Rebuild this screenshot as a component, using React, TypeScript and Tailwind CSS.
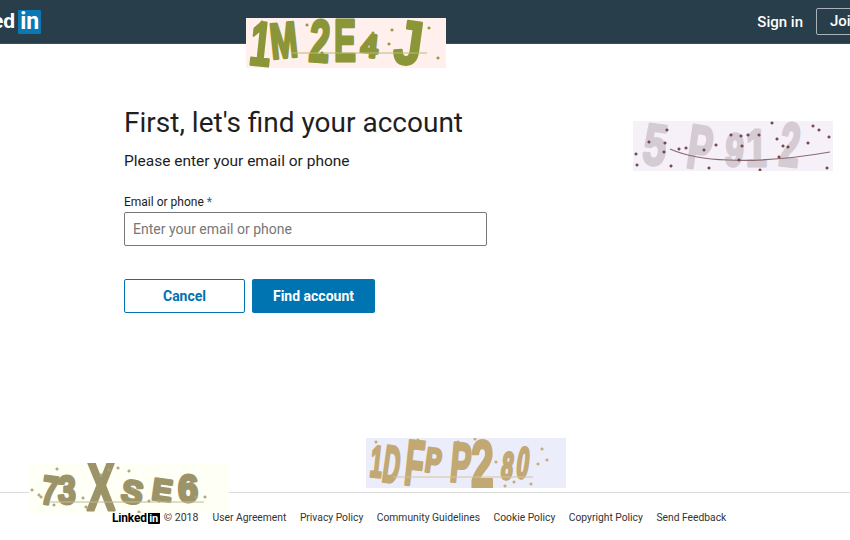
type Glyph = { c: string; x: number; y: number; size: number; sx?: number; rot?: number };

type CaptchaProps = {
  className: string;
  bg: string;
  ink: string;
  dotInk: string;
  lineInk: string;
  line: string;
  glyphs: Glyph[];
  dots: [number, number][];
};

function Captcha({ className, bg, ink, dotInk, lineInk, line, glyphs, dots }: CaptchaProps) {
  return (
    <svg className={`absolute ${className}`} width="200" height="50" viewBox="0 0 200 50">
      <rect width="200" height="50" fill={bg} />
      {glyphs.map((g, i) => (
        <text
          key={i}
          transform={`translate(${g.x} ${g.y}) rotate(${g.rot ?? 0}) scale(${g.sx ?? 1} 1)`}
          fontFamily="'Liberation Sans', sans-serif"
          fontWeight={700}
          fontSize={g.size}
          fill={ink}
          stroke={ink}
          strokeWidth="3"
          strokeLinejoin="round"
        >
          {g.c}
        </text>
      ))}
      <path d={line} fill="none" stroke={lineInk} strokeWidth="1.2" />
      {dots.map(([x, y], i) => (
        <path key={i} d={`M${x - 1.5} ${y}H${x + 1.5}M${x} ${y - 1.5}V${y + 1.5}`} stroke={dotInk} strokeWidth="1.4" />
      ))}
    </svg>
  );
}

function InLogo({ className }: { className: string }) {
  return (
    <span className={`inline-flex items-center justify-center rounded-[1px] font-bold ${className}`}>in</span>
  );
}

const footerLinks = [
  "User Agreement",
  "Privacy Policy",
  "Community Guidelines",
  "Cookie Policy",
  "Copyright Policy",
  "Send Feedback",
];

export default function App() {
  return (
    <div className="relative h-[540px] w-[850px] overflow-hidden bg-white font-['Roboto',sans-serif] text-[#1d1d1d]">
      <header className="flex h-[44px] items-center justify-between border-b border-[#3a4f5b] bg-[#283e4a]">
        <div className="flex items-center">
          <span className="ml-[-8px] text-[21px] font-bold leading-none text-white">ed</span>
          <InLogo className="ml-[3px] h-[24px] w-[23px] bg-[#0a78b5] pb-[1px] text-[23px] leading-none text-white" />
        </div>
        <div className="flex items-center">
          <span className="whitespace-nowrap pt-[1px] text-[15px] font-medium text-white">Sign in</span>
          <span className="ml-[13px] mr-[-36px] flex h-[27px] w-[70px] items-center whitespace-nowrap rounded-[2px] border border-[#a8b2b8] pl-[13px] text-[15px] font-medium text-white">
            Join now
          </span>
        </div>
      </header>

      <main className="pl-[124px] pt-[61px]">
        <h1 className="text-[28px] leading-[36px] text-[#1f1f1f]">First, let's find your account</h1>
        <p className="mt-[9px] text-[15.5px] leading-[22px]">Please enter your email or phone</p>
        <label className="mt-[21px] block text-[12px] leading-[18px]">
          Email or phone <span className="text-[#0073b1]">*</span>
        </label>
        <div className="mt-[1px] flex h-[34px] w-[363px] items-center rounded-[2px] border border-[#777] pl-[8px] text-[14px] text-[#777]">
          Enter your email or phone
        </div>
        <div className="mt-[33px] flex gap-[7px]">
          <button className="h-[34px] w-[121px] rounded-[2px] border border-[#0073b1] bg-white text-[14px] font-bold text-[#0073b1]">
            Cancel
          </button>
          <button className="h-[34px] w-[123px] rounded-[2px] bg-[#0073b1] text-[14px] font-bold text-white">
            Find account
          </button>
        </div>
      </main>

      <footer className="absolute inset-x-0 top-[492px] flex h-[48px] items-start border-t border-[#dcdcdc] pl-[112px] pt-[18px] text-[10.3px] leading-[14px] text-[#333]">
        <span className="flex items-center">
          <span className="text-[12px] font-bold tracking-[-0.2px] text-black">Linked</span>
          <InLogo className="ml-[1px] h-[12px] w-[12px] bg-black text-[11px] leading-none text-white" />
        </span>
        <span className="ml-[4px] text-[10.6px]">© 2018</span>
        <div className="ml-[14px] flex gap-[13.5px]">
          {footerLinks.map((l) => (
            <span key={l}>{l}</span>
          ))}
        </div>
      </footer>

      <Captcha
        className="left-[246px] top-[18px]"
        bg="#fff0ee"
        ink="#8b9638"
        dotInk="#8b9638"
        lineInk="#b5bb72"
        line="M45 35H181"
        glyphs={[
          { c: "1", x: 2, y: 46, size: 62, sx: 0.62, rot: 6 },
          { c: "M", x: 26, y: 41, size: 50, sx: 0.65, rot: -6 },
          { c: "2", x: 62, y: 43, size: 60, sx: 0.62, rot: 4 },
          { c: "E", x: 88, y: 43, size: 60, sx: 0.55 },
          { c: "4", x: 114, y: 38, size: 32, sx: 0.95, rot: 6 },
          { c: "J", x: 146, y: 44, size: 62, sx: 0.8, rot: 8 },
        ]}
        dots={[[15, 34], [16, 4], [28, 12], [61, 7], [76, 35], [78, 44], [92, 41], [118, 30], [127, 15], [143, 26], [146, 12], [155, 43], [183, 10], [192, 40]]}
      />

      <Captcha
        className="left-[633px] top-[121px]"
        bg="#f6f1f8"
        ink="#d5cbd2"
        dotInk="#6d3f4a"
        lineInk="#8a6a72"
        line="M37 28Q60 38 95 39Q140 41 197 31"
        glyphs={[
          { c: "5", x: 8, y: 42, size: 58, sx: 0.72, rot: 8 },
          { c: "P", x: 52, y: 46, size: 62, sx: 0.6, rot: 8 },
          { c: "9", x: 91, y: 44, size: 46, sx: 0.72, rot: 5 },
          { c: "1", x: 113, y: 45, size: 52, sx: 0.72 },
          { c: "2", x: 145, y: 44, size: 62, sx: 0.58, rot: 6 },
        ]}
        dots={[[34, 9], [16, 21], [32, 22], [3, 33], [31, 31], [46, 28], [53, 27], [71, 29], [83, 24], [98, 14], [108, 15], [115, 14], [126, 14], [109, 25], [139, 2], [144, 18], [150, 25], [155, 26], [146, 36], [106, 39], [4, 44], [38, 45], [76, 47], [175, 22], [180, 5], [186, 9], [196, 16], [194, 47], [127, 49]]}
      />

      <Captcha
        className="left-[29px] top-[463px]"
        bg="#fefff5"
        ink="#9c9468"
        dotInk="#a9a27a"
        lineInk="#c0bb96"
        line="M20 39H175"
        glyphs={[
          { c: "7", x: 11, y: 40, size: 40, sx: 0.72, rot: 8 },
          { c: "3", x: 29, y: 41, size: 40, sx: 0.8 },
          { c: "X", x: 58, y: 47, size: 68, sx: 0.62 },
          { c: "S", x: 91, y: 38, size: 32, sx: 1, rot: 10 },
          { c: "E", x: 122, y: 36, size: 30, sx: 1, rot: 8 },
          { c: "6", x: 149, y: 39, size: 38, sx: 0.95 },
        ]}
        dots={[[3, 27], [10, 32], [12, 34], [28, 6], [54, 35], [57, 44], [72, 12], [80, 7], [89, 5], [100, 8], [104, 26], [110, 49], [120, 38], [130, 38], [167, 34], [176, 34], [25, 42]]}
      />

      <Captcha
        className="left-[366px] top-[438px]"
        bg="#ecedfb"
        ink="#c2a872"
        dotInk="#c2a872"
        lineInk="#d5c49e"
        line="M27 39H167"
        glyphs={[
          { c: "1", x: 3, y: 38, size: 44, sx: 0.5, rot: 6 },
          { c: "D", x: 15, y: 43, size: 52, sx: 0.45, rot: 8 },
          { c: "F", x: 37, y: 46, size: 64, sx: 0.48, rot: 6 },
          { c: "P", x: 58, y: 33, size: 34, sx: 0.7, rot: 8 },
          { c: "P", x: 83, y: 43, size: 56, sx: 0.55, rot: 5 },
          { c: "2", x: 105, y: 49, size: 66, sx: 0.62 },
          { c: "8", x: 134, y: 40, size: 38, sx: 0.55, rot: 8 },
          { c: "0", x: 149, y: 39, size: 44, sx: 0.5, rot: 8 },
        ]}
        dots={[[10, 4], [52, 2], [92, 4], [109, 1], [121, 28], [130, 24], [148, 44], [165, 46], [176, 11], [172, 26], [181, 22], [139, 48], [115, 36]]}
      />
    </div>
  );
}
